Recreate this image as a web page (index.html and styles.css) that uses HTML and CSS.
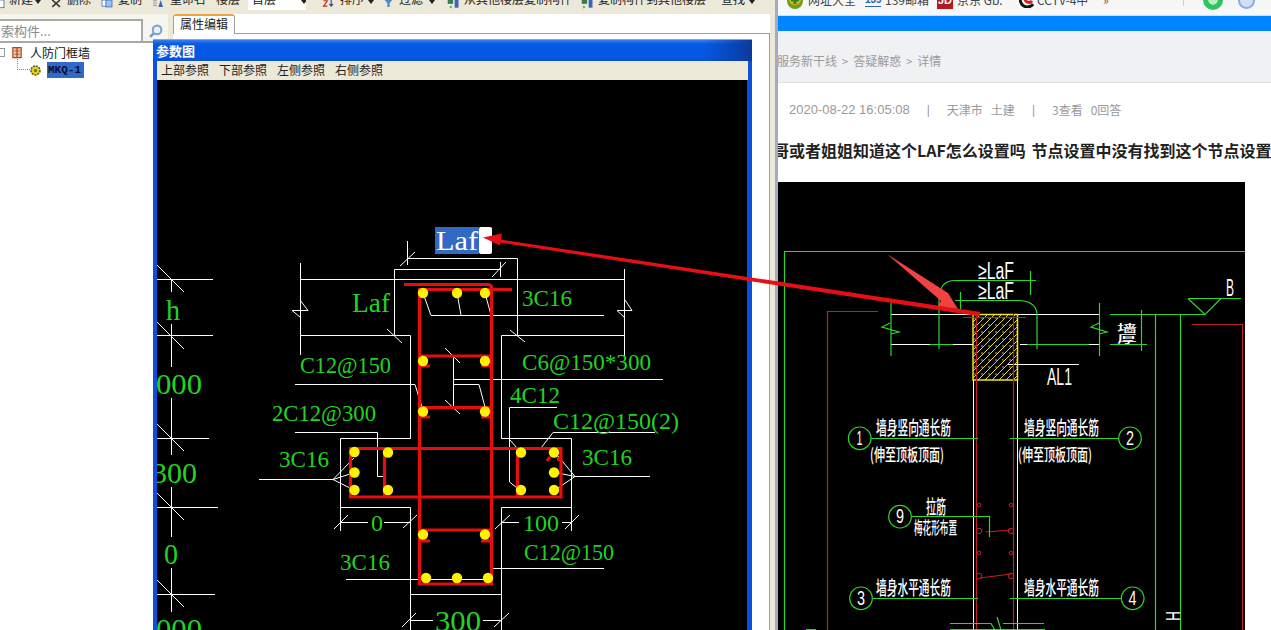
FILE: index.html
```html
<!DOCTYPE html>
<html lang="zh">
<head>
<meta charset="utf-8">
<title>参数图</title>
<link rel="stylesheet" href="styles.css">
</head>
<body>
<div class="desktop">
  <section class="app">
    <div class="toolbar">
      <div class="tool t-new"><svg class="ti" viewBox="0 0 13 13"><rect x="1" y="0" width="10" height="10" fill="#fff" stroke="#3a67b5"/></svg><span>新建</span><i class="caret"></i></div>
      <div class="tool t-del"><svg class="ti" viewBox="0 0 13 13"><path d="M1 0l10 9M11 0L1 9" stroke="#333" stroke-width="2" fill="none"/></svg><span>删除</span></div>
      <div class="tool t-copy"><svg class="ti" viewBox="0 0 13 13"><rect x="0" y="0" width="7" height="8" fill="#fff" stroke="#3a67b5"/><rect x="5" y="0" width="8" height="9" fill="#9cc0ee" stroke="#3a67b5"/></svg><span>复制</span></div>
      <div class="tool t-rename"><svg class="ti" viewBox="0 0 15 13"><path d="M8 9l3-9 3 9z" fill="#3a67b5"/><path d="M1 1h5M1 4h5M1 7h5" stroke="#999" stroke-width="1.4"/></svg><span>重命名</span></div>
      <div class="tool t-floor"><span>楼层</span></div>
      <div class="select"><span>首层</span><i class="caret"></i></div>
      <div class="tool t-sort"><svg class="ti" viewBox="0 0 15 13"><path d="M1 1h5L1 8h5" stroke="#c03020" stroke-width="1.5" fill="none"/><path d="M11 0v7M8.500 5l2.500 3 2.500-3" stroke="#2a4f96" stroke-width="1.500" fill="none"/></svg><span>排序</span><i class="caret"></i></div>
      <div class="tool t-filter"><svg class="ti" viewBox="0 0 10 13"><path d="M0 0h10L6.500 4v5h-3V4z" fill="#4f86d0"/></svg><span>过滤</span><i class="caret"></i></div>
      <div class="tool t-from"><svg class="ti" viewBox="0 0 15 13"><rect x="0" y="0" width="7" height="5" fill="#3a7a50"/><rect x="9" y="0" width="5" height="10" fill="#3a67b5"/><path d="M2 9l3-2v4z" fill="#38a040"/></svg><span>从其他楼层复制构件</span></div>
      <div class="tool t-to"><svg class="ti" viewBox="0 0 15 13"><rect x="0" y="0" width="7" height="5" fill="#3a7a50"/><rect x="9" y="0" width="5" height="10" fill="#3a67b5"/><path d="M5 9L2 7v4z" fill="#38a040"/></svg><span>复制构件到其他楼层</span></div>
      <div class="tool t-find"><span>查找</span><i class="caret"></i></div>
    </div>
    <div class="workspace">
      <aside class="side">
        <div class="search">
          <div class="search-box">索构件...</div>
          <svg class="search-icon" viewBox="0 0 14 14"><circle cx="8.500" cy="5.500" r="4" fill="#e8f2fb" stroke="#78a8d0" stroke-width="2"/><path d="M5.500 8.500L2 12" stroke="#6c9cc4" stroke-width="2.500"/></svg>
        </div>
        <div class="tree">
          <div class="tree-root">
            <span class="tree-toggle"></span>
            <svg class="tree-ico" viewBox="0 0 12 14"><path d="M1 1h10v12H1zM6 1v12" fill="#e8c8a8" stroke="#b04a20" stroke-width="1.500"/><path d="M3 5h6M3 9h6" stroke="#b04a20"/></svg>
            <span>人防门框墙</span>
          </div>
          <div class="tree-child">
            <span class="tree-dots"></span>
            <svg class="tree-gear" viewBox="0 0 11 11"><circle cx="5.500" cy="5.500" r="4.500" fill="#e8d020" stroke="#4a5a10" stroke-width="1.500" stroke-dasharray="2 1"/><circle cx="5.500" cy="5.500" r="1.500" fill="#5a6a10"/></svg>
            <span class="tree-sel">MKQ-1</span>
          </div>
        </div>
      </aside>
      <main class="editor">
        <div class="tabs"><div class="tab">属性编辑</div></div>
        <div class="tab-body"></div>
      </main>
    </div>
  </section>

  <section class="browser">
    <div class="bookmarks">
      <svg class="bm-ico bm-site" viewBox="0 0 16 16"><circle cx="8" cy="8" r="8" fill="#6aa020"/><circle cx="8" cy="6" r="6" fill="#e8b020"/><path d="M8 3v8M4 7h8" stroke="#2a8a20" stroke-width="3"/></svg>
      <span class="bm-text bm-t1">网址大全</span>
      <span class="bm-139">139</span>
      <span class="bm-text bm-t2">139邮箱</span>
      <span class="bm-jd">JD</span>
      <span class="bm-text bm-t3">京东 Gb.</span>
      <svg class="bm-ico bm-cctv" viewBox="0 0 15 15"><path d="M12 1A7 7 0 1 0 14 11" fill="none" stroke="#111" stroke-width="3"/><path d="M12 2A4 4 0 1 0 13 8" fill="none" stroke="#d02020" stroke-width="3"/></svg>
      <span class="bm-text bm-t4">CCTV-4中</span>
      <span class="bm-more">»</span>
      <span class="bm-sep"></span>
      <span class="bm-round bm-green"></span>
      <span class="bm-round bm-blue"></span>
    </div>
    <div class="bluebar"></div>
    <nav class="crumbs"><span>服务新干线</span><b>&gt;</b><span>答疑解惑</span><b>&gt;</b><span>详情</span></nav>
    <div class="meta">
      <span class="m-date">2020-08-22 16:05:08</span><span class="m-bar">|</span><span>天津市</span><span class="m-sub">土建</span><span class="m-bar m-bar2">|</span><span>3查看</span><span class="m-sub">0回答</span>
    </div>
    <h1 class="q-title">哥哥或者姐姐知道这个LAF怎么设置吗 节点设置中没有找到这个节点设置</h1>
    <div class="q-image">
      <svg class="cad" viewBox="778 182 467 448">
        <defs>
          <pattern id="hatch" patternUnits="userSpaceOnUse" width="7" height="7">
            <path d="M-1 8L8 -1M-1 1L1 -1M6 8L8 6" stroke="#e6d820" stroke-width="1"/>
            <circle cx="2" cy="3" r=".7" fill="#fff23a"/>
          </pattern>
        </defs>
        <rect x="973" y="314.500" width="44.500" height="65.500" fill="url(#hatch)" stroke="#f2e61e" stroke-width="1.500"/>
        <path class="ln-white" d="M891 314.500H973M1018 314.500H1099M891 344.500H930M953 344.500H973M1020 344.500H1027M1089 344.500H1099M1008 364.500H1079M973.500 380V630M1017.500 380V630"/>
        <path class="ln-red-d" d="M827.500 630V311.500H878M976.500 314V630M1013.500 314V630M963 317.500H1026M1192 324.500H1242.500V630M986 532L1011 530M980 578L1011 574"/>
        <path class="ln-green" d="M784.500 630V251.500H1245M891 303V356M890 323L882 327L899 332L891 334M1099.500 303V356M1099 323L1091 327L1107 332L1099 334M939 349V300Q939 280.500 955 280.500H1036M1030.500 271V295M960.500 292V309M955 300.500H1020Q1037 302 1037 315V349M930 344.500H953M1027 344.500H1089M935 344.500H943M1110 314.500H1205M1110 344.500H1147M1141.500 310V351M1155.500 314V630M1180.500 314V630M1188 298.500H1241M1188 298.500L1205 314.500L1221 298.500M871 438.500H978M1010 438.500H1119M911 516.500H989.500V537M873 598.500H978M1010 598.500H1122M950 623.500H991L995 630M997 617L1001 630M1003 623.500H1044M950 629.500H1045M806 629.500H816"/>
        <circle class="ln-green" cx="859.700" cy="438.300" r="11.300"/>
        <circle class="ln-green" cx="1130" cy="438.300" r="11.300"/>
        <circle class="ln-green" cx="900" cy="516.700" r="11.300"/>
        <circle class="ln-green" cx="861" cy="598.300" r="11.300"/>
        <circle class="ln-green" cx="1132.700" cy="598.300" r="11.300"/>
        <g class="ties">
          <circle cx="979" cy="505" r="1.800"/><circle cx="1011" cy="505" r="1.800"/>
          <circle cx="979" cy="553" r="1.800"/><circle cx="1011" cy="553" r="1.800"/>
          <circle cx="979" cy="531" r="2.800"/><circle cx="1011" cy="531" r="2.800"/>
          <circle cx="979" cy="576" r="2.800"/><circle cx="1011" cy="576" r="2.800"/>
        </g>
        <polygon class="pink-arrow" points="887,254 948,293 958,309 937,307 941,301"/>
        <text class="dw" x="978" y="279" textLength="36" lengthAdjust="spacingAndGlyphs">≥LaF</text>
        <text class="dw" x="978" y="299" textLength="36" lengthAdjust="spacingAndGlyphs">≥LaF</text>
        <text class="dw" x="1047" y="385" textLength="25" lengthAdjust="spacingAndGlyphs">AL1</text>
        <text class="dw" x="1226" y="296" textLength="8" lengthAdjust="spacingAndGlyphs">B</text>
        <text class="dw-cn dw-s" x="1117" y="332" textLength="20" lengthAdjust="spacingAndGlyphs">墙</text>
        <text class="dw-cn dw-s" x="1117" y="343" textLength="20" lengthAdjust="spacingAndGlyphs">厚</text>
        <text class="dw-cn" x="876" y="435" textLength="75" lengthAdjust="spacingAndGlyphs">墙身竖向通长筋</text>
        <text class="dw-cn dw-m" x="870" y="461" textLength="74" lengthAdjust="spacingAndGlyphs">(伸至顶板顶面)</text>
        <text class="dw-cn" x="1024" y="435" textLength="75" lengthAdjust="spacingAndGlyphs">墙身竖向通长筋</text>
        <text class="dw-cn dw-m" x="1018" y="461" textLength="74" lengthAdjust="spacingAndGlyphs">(伸至顶板顶面)</text>
        <text class="dw-cn" x="926" y="514" textLength="20" lengthAdjust="spacingAndGlyphs">拉筋</text>
        <text class="dw-cn dw-m" x="914" y="534" textLength="43" lengthAdjust="spacingAndGlyphs">梅花形布置</text>
        <text class="dw-cn" x="876" y="595" textLength="75" lengthAdjust="spacingAndGlyphs">墙身水平通长筋</text>
        <text class="dw-cn" x="1024" y="595" textLength="75" lengthAdjust="spacingAndGlyphs">墙身水平通长筋</text>
        <text class="dw dw-d" x="856.500" y="445" textLength="6" lengthAdjust="spacingAndGlyphs">1</text>
        <text class="dw dw-d" x="1126" y="445" textLength="8" lengthAdjust="spacingAndGlyphs">2</text>
        <text class="dw dw-d" x="896" y="523" textLength="8" lengthAdjust="spacingAndGlyphs">9</text>
        <text class="dw dw-d" x="857" y="605" textLength="8" lengthAdjust="spacingAndGlyphs">3</text>
        <text class="dw dw-d" x="1128.500" y="605" textLength="8" lengthAdjust="spacingAndGlyphs">4</text>
        <text class="dw dw-d" transform="translate(1166 611) rotate(90)" textLength="10" lengthAdjust="spacingAndGlyphs">H</text>
      </svg>
    </div>
  </section>

  <section class="param-win">
    <header class="win-title">参数图</header>
    <div class="win-menu"><span>上部参照</span><span>下部参照</span><span>左侧参照</span><span>右侧参照</span></div>
    <div class="win-canvas">
      <svg class="cad" viewBox="157 80 590 550">
        <path class="ln-white" d="M157 279.500H213M157 335.500H213M157 438.500H209M157 507.500H218M157 594.500H215
          M157 265L184 292M157 322L184 349M157 424L184 451M157 493L184 520M157 580L184 607
          M171.500 279V292M171.500 324V367M171.500 398V455M171.500 487V537M171.500 568V612
          M407.500 241V265M400 266L415 252M407.500 258.500H517.500V335.500M394.500 335V269.500H500.500M500.500 262V277M492 277L506 262
          M300.500 279.500H624.500M300.500 263V355M292 310.500H308L300 300M292 310.500L300 317M624.500 269V357M617 310.500H632L625 300M617 310.500L625 318
          M300.500 335.500H410.500V438.500H340.500V531M340.500 507.500H410.500V630M387 329L402 343M334 529L348 515M340.500 522.500H368M384 522.500H410.500M403 528L417 515
          M624.500 335.500H501.500V438.500H571.500V531M501.500 507.500H571.500M501.500 507.500V630M510 330L525 342M501.500 522.500H519M562 522.500H571.500M495 529L510 515M565 529L579 515
          M410.500 594.500H501.500M410.500 620.500H433M483 620.500H501.500M402 627L416 613M494 627L509 613
          M423 293L431 315.500H604M457 293L461 315M485 293L491 315
          M295 384.500H415L422 407M453.500 355V407M453.500 384.500H479L485 407M453.500 379.500H663M445 348L460 363M445 400L460 414
          M557 407.500H509.500V482M510 440L517 448M509.500 482L517 488
          M655 432.500H553L541 448M259 479.500H333L354 458M333 479.500L350 474M333 479.500L350 488
          M295 432.500H377.500V476.500H383M346 579.500H488M650 476.500H575L558 456M575 476.500L558 473M575 476.500L558 488M491 568.500H604"/>
        <path class="rebar" d="M404 284.500H488Q491.500 284.500 491.500 288V584H419.500V289.500H512
          M419.500 356H491.500M419.500 366H430M481 366H491.500M419.500 407.500H491.500M419.500 417H430M481 417H491.500
          M350.500 448.500H561V497H350.500ZM384.500 497V448.500H392M517.500 497V448.500H525M392 497H384.500M419.500 530H491.500M419.500 541H430M481 541H491.500
          M550 457L547 461M558 457L559 461"/>
        <g class="dots">
          <circle cx="423" cy="293" r="5.200"/><circle cx="457" cy="293" r="5.200"/><circle cx="485" cy="293" r="5.200"/>
          <circle cx="423" cy="361" r="5.200"/><circle cx="485" cy="361" r="5.200"/>
          <circle cx="423" cy="411.500" r="5.200"/><circle cx="485" cy="411.500" r="5.200"/>
          <circle cx="354.500" cy="452" r="5.200"/><circle cx="354.500" cy="472.500" r="5.200"/><circle cx="354.500" cy="490" r="5.200"/>
          <circle cx="388" cy="452.500" r="5.200"/><circle cx="388" cy="490" r="5.200"/>
          <circle cx="521" cy="452.500" r="5.200"/><circle cx="521" cy="490" r="5.200"/>
          <circle cx="554" cy="452.500" r="5.200"/><circle cx="554" cy="472.500" r="5.200"/><circle cx="554" cy="490" r="5.200"/>
          <circle cx="423" cy="534.500" r="5.200"/><circle cx="485" cy="534.500" r="5.200"/>
          <circle cx="426" cy="578" r="5.200"/><circle cx="457" cy="578" r="5.200"/><circle cx="488" cy="578" r="5.200"/>
        </g>
        <text class="lab lab-b" x="166" y="320" textLength="14" lengthAdjust="spacingAndGlyphs">h</text>
        <text class="lab lab-b" x="156" y="394" textLength="46" lengthAdjust="spacingAndGlyphs">000</text>
        <text class="lab lab-b" x="152" y="483" textLength="45" lengthAdjust="spacingAndGlyphs">300</text>
        <text class="lab lab-b" x="164" y="564" textLength="14" lengthAdjust="spacingAndGlyphs">0</text>
        <text class="lab lab-b" x="156" y="639" textLength="46" lengthAdjust="spacingAndGlyphs">000</text>
        <text class="lab lab-l" x="352" y="312" textLength="38" lengthAdjust="spacingAndGlyphs">Laf</text>
        <text class="lab" x="300" y="373" textLength="91" lengthAdjust="spacingAndGlyphs">C12@150</text>
        <text class="lab" x="272" y="421" textLength="104" lengthAdjust="spacingAndGlyphs">2C12@300</text>
        <text class="lab" x="279" y="467" textLength="50" lengthAdjust="spacingAndGlyphs">3C16</text>
        <text class="lab" x="371" y="531" textLength="12" lengthAdjust="spacingAndGlyphs">0</text>
        <text class="lab" x="340" y="570" textLength="50" lengthAdjust="spacingAndGlyphs">3C16</text>
        <text class="lab lab-b" x="435" y="631" textLength="46" lengthAdjust="spacingAndGlyphs">300</text>
        <text class="lab" x="522" y="306" textLength="50" lengthAdjust="spacingAndGlyphs">3C16</text>
        <text class="lab" x="522" y="370" textLength="129" lengthAdjust="spacingAndGlyphs">C6@150*300</text>
        <text class="lab" x="510" y="403" textLength="50" lengthAdjust="spacingAndGlyphs">4C12</text>
        <text class="lab" x="553" y="429" textLength="126" lengthAdjust="spacingAndGlyphs">C12@150(2)</text>
        <text class="lab" x="582" y="465" textLength="50" lengthAdjust="spacingAndGlyphs">3C16</text>
        <text class="lab" x="523" y="531" textLength="36" lengthAdjust="spacingAndGlyphs">100</text>
        <text class="lab" x="524" y="560" textLength="90" lengthAdjust="spacingAndGlyphs">C12@150</text>
        <rect class="sel-blue" x="435" y="227" width="44" height="27"/>
        <rect class="sel-white" x="479" y="227" width="13" height="27" rx="2"/>
        <text class="lab-sel" x="436" y="250" textLength="42" lengthAdjust="spacingAndGlyphs">Laf</text>
      </svg>
    </div>
  </section>

  <svg class="overlay" viewBox="0 0 1271 630">
    <polygon class="arrow" points="500,239.500 980,312 980,316.500 500,242.500"/>
    <polygon class="arrow" points="483,237.500 502,233.500 500,245.500"/>
  </svg>
</div>
</body>
</html>
```
FILE: styles.css
```css
* { box-sizing: border-box; }
html, body { margin: 0; width: 1271px; height: 630px; overflow: hidden; background: #fff; }
body { font-family: "Noto Sans CJK SC", "Liberation Sans", sans-serif; font-size: 12px; color: #111; }

.desktop { position: relative; display: flex; width: 1271px; height: 630px; overflow: hidden; }

/* left application */
.app { width: 775px; flex: none; display: flex; flex-direction: column; background: #ece9d8; }
.toolbar { height: 14px; flex: none; display: flex; margin-left: -6px; overflow: hidden; background: #ece9d8; }
.tool { flex: none; display: flex; gap: 4px; align-items: flex-start; height: 14px; line-height: 14px; }
.tool span { margin-top: -8px; white-space: nowrap; color: #222; }
.ti { width: 13px; height: 10px; flex: none; display: block; }
.caret { width: 0; height: 0; border: 3px solid transparent; border-top: 4px solid #222; margin-top: 0; flex: none; }
.t-new { width: 56px; gap: 2px; }
.t-del { width: 50px; }
.t-copy { width: 50px; }
.t-copy .ti { width: 14px; }
.t-rename { width: 66px; }
.t-rename .ti { width: 16px; }
.t-floor { width: 32px; }
.select { flex: none; width: 58px; height: 10px; background: #fff; display: flex; justify-content: space-between; padding: 0 0 0 4px; margin-right: 15px; overflow: hidden; }
.select span { margin-top: -8px; line-height: 14px; color: #222; }
.select .caret { margin-right: -1px; }
.t-sort { width: 63px; }
.t-sort .ti { width: 15px; }
.t-filter { width: 62px; gap: 6px; }
.t-filter .ti { width: 9px; }
.t-from { width: 134px; gap: 3px; }
.t-from .ti, .t-to .ti { width: 15px; }
.t-to { width: 141px; gap: 3px; }
.t-find { width: 52px; }

.workspace { flex: 1; display: flex; min-height: 0; }
.side { width: 168px; flex: none; background: #fff; display: flex; flex-direction: column; }
.search { height: 29px; flex: none; padding: 5px 0 0 0; display: flex; align-items: flex-start; background: #f6f5ee; border-bottom: 2px solid #a3a3a3; }
.search-box { width: 143px; height: 24px; background: #fff; border: 2px solid #a9aaa8; border-left: 0; line-height: 19px; font-size: 13px; color: #8a8a8a; padding-left: 1px; }
.search-icon { width: 15px; height: 15px; margin: 5px 0 0 5px; }
.tree { flex: 1; }
.tree-root { display: flex; align-items: center; height: 19px; position: relative; }
.tree-toggle { width: 5px; height: 9px; border: 1px solid #999; border-left: 0; flex: none; margin-right: 7px; }
.tree-ico { width: 10px; height: 13px; margin-right: 8px; flex: none; }
.tree-child { display: flex; align-items: center; height: 16px; margin-left: 17px; }
.tree-dots { width: 13px; height: 11px; margin-top: -11px; border-left: 1px dotted #888; border-bottom: 1px dotted #888; flex: none; }
.tree-gear { width: 11px; height: 11px; margin: 0 6px 0 0; flex: none; }
.tree-sel { background: #316ac5; color: #0c0c30; font-family: "Liberation Mono", monospace; font-size: 11px; font-weight: 700; width: 37px; height: 16px; line-height: 16px; padding-left: 1px; }

.editor { flex: 1; min-width: 0; display: flex; flex-direction: column; padding-left: 5px; background: #ece9d8; }
.tabs { height: 20px; flex: none; background: #fff; border-bottom: 1px solid #98a2a6; display: flex; margin-left: 0; margin-right: 5px; }
.tab { width: 62px; height: 20px; background: #fff; border: 1px solid #98a2a6; border-top: 2px solid #eda540; border-bottom: 0; border-radius: 3px 3px 0 0; padding-left: 6px; line-height: 15px; color: #222; }
.tab-body { flex: 1; background: #fff; border-right: 1px solid #98a2a6; margin-right: 5px; }

/* browser */
.browser { flex: 1; min-width: 0; display: flex; flex-direction: column; background: #fff; border-left: 3px solid #a2aac8; overflow: hidden; }
.bookmarks { position: relative; height: 16px; flex: none; background: #f7f7f7; border-bottom: 1px solid #dcdcdc; overflow: hidden; }
.bm-ico, .bm-139, .bm-jd, .bm-text, .bm-more, .bm-sep, .bm-round { position: absolute; }
.bm-text { top: -7px; line-height: 14px; color: #444; white-space: nowrap; }
.bm-site { left: 9px; top: -7px; width: 16px; height: 16px; }
.bm-t1 { left: 30px; }
.bm-139 { left: 87px; top: -6px; width: 16px; font: 700 10px/12px "Liberation Sans", sans-serif; color: #2c62b0; border-bottom: 1px solid #2c62b0; }
.bm-t2 { left: 107px; }
.bm-jd { left: 159px; top: -6px; width: 16px; height: 15px; background: #b3191f; color: #fff; font: 700 11px/12px "Liberation Sans", sans-serif; text-align: center; }
.bm-t3 { left: 179px; }
.bm-cctv { left: 241px; top: -7px; width: 15px; height: 15px; }
.bm-t4 { left: 259px; }
.bm-more { left: 325px; top: -7px; line-height: 14px; color: #666; }
.bm-sep { left: 405px; top: 0; width: 1px; height: 6px; background: #ccc; }
.bm-round { border-radius: 50%; }
.bm-green { left: 425px; top: -10px; width: 20px; height: 20px; background: #2fc45e; border: 5px solid #2fc45e; box-shadow: inset 0 0 0 6px #b8eec8; }
.bm-blue { left: 460px; top: -8px; width: 17px; height: 17px; background: #cfe0f4; border: 2px solid #7fb0e6; }
.bluebar { height: 15px; flex: none; background: #0084ff; }
.crumbs { height: 52px; flex: none; background: #eff1f3; border-bottom: 1px solid #dedede; display: flex; align-items: center; color: #9a9a9a; margin-left: 0; padding-top: 8px; line-height: 16px; white-space: nowrap; }
.crumbs span:first-child { margin-left: -1px; }
.crumbs b { font-weight: 400; margin: 0 5px; font-size: 11px; }
.meta { flex: none; height: 18px; margin-top: 18px; padding-left: 11px; display: flex; align-items: center; color: #999; white-space: nowrap; line-height: 18px; }
.m-date { font: 13px/18px "Liberation Sans", sans-serif; margin-right: 17px; }
.m-bar { font: 12px/18px "Liberation Sans", sans-serif; margin-right: 17px; }
.m-sub { margin-left: 8px; }
.m-bar2 { margin-left: 17px; }
.q-title { flex: none; margin: 21px 0 0 -5px; height: 20px; font-size: 16px; line-height: 20px; font-weight: 700; color: #222; white-space: nowrap; text-indent: -16px; word-spacing: 2px; }
.q-image { flex: none; width: 467px; height: 448px; margin-top: 22px; background: #000; overflow: hidden; }
.cad { display: block; width: 100%; height: 100%; }

/* drawing styles */
.ln-white, .ln-green, .ln-red-d { fill: none; stroke-width: 1; }
.ln-white { stroke: #fff; }
.ln-green { stroke: #2fd52f; fill: none; stroke-width: 1.200; }
.ln-red-d { stroke: #c01f24; stroke-width: 1.200; }
.ties circle { fill: none; stroke: #c02525; }
.pink-arrow { fill: #ef4343; }
.dw { fill: #fff; font-family: "Liberation Sans", sans-serif; font-size: 23px; font-weight: 400; }
.dw-d { font-size: 20px; }
.dw-cn { fill: #fff; font-family: "Noto Sans CJK SC", sans-serif; font-size: 19px; font-weight: 500; }
.dw-m { font-size: 17px; }
.dw-s { font-size: 10px; }
.rebar { fill: none; stroke: #e60d0d; stroke-width: 3.200; }
.dots circle { fill: #fff200; }
.lab { fill: #22d322; font-family: "Liberation Serif", serif; font-size: 24px; }
.lab-b { font-size: 30px; }
.lab-l { font-size: 27px; }
.lab-sel { fill: #fff; font-family: "Liberation Serif", serif; font-size: 27px; }
.sel-blue { fill: #316ac5; }
.sel-white { fill: #fff; }

/* parameter window: floats over the editor */
.param-win { position: absolute; left: 153px; top: 39px; width: 599px; height: 600px; background: #0a50dc; padding: 0 4px 0 4px; display: flex; flex-direction: column; border-top: 1px solid #7aa6ea; }
.win-title { height: 21px; flex: none; margin: 0 -4px; padding-left: 3px; background: linear-gradient(90deg, transparent 92%, #0b3a9c 100%), linear-gradient(180deg, #3a7eea, #0558e4 20%, #0558e4 80%, #0a4fd0); color: #fff; font-weight: 700; font-size: 13px; line-height: 22px; }
.win-menu { height: 19px; flex: none; background: #ece9d8; display: flex; gap: 10px; padding-left: 4px; line-height: 17px; color: #222; }
.win-canvas { flex: 1; background: #000; overflow: hidden; min-height: 0; width: 590px; }
.win-canvas .cad { height: 550px; width: 590px; }

.overlay { position: absolute; left: 0; top: 0; width: 1271px; height: 630px; pointer-events: none; }
.arrow { fill: #e80f14; }
```
